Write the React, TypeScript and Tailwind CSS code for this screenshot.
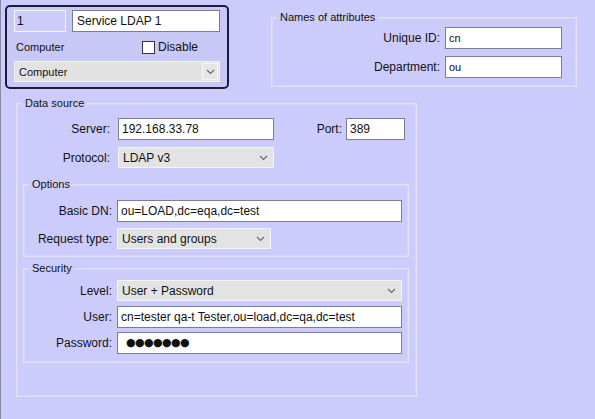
import React from 'react';

const Chevron = () => (
    <svg width="9" height="6" viewBox="0 0 9 6" className="shrink-0">
        <polyline points="1,1 4.5,4.5 8,1" fill="none" stroke="#6a6a6a" strokeWidth="1.2" />
    </svg>
);

function Field({ value, className = '' }: { value: string; className?: string }) {
    return (
        <div className={`h-[22px] bg-white border border-[#7c7c8e] flex items-center pl-[3px] whitespace-nowrap overflow-hidden ${className}`}>
            {value}
        </div>
    );
}

function Select({ value, className = '' }: { value: string; className?: string }) {
    return (
        <div className={`h-[21px] bg-[#e3e3e3] border border-[#f4f4f4] flex items-center pl-[4px] pr-[5px] ${className}`}>
            <span className="flex-1">{value}</span>
            <Chevron />
        </div>
    );
}

function Group({ title, className = '', children }: { title: string; className?: string; children: React.ReactNode }) {
    return (
        <fieldset className={`border border-[#e2e2f4] shadow-[inset_0_0_0_1px_#d6d6ee] ${className}`}>
            <legend className="ml-[5px] px-[3px] leading-[14px]">{title}</legend>
            {children}
        </fieldset>
    );
}

export default function App() {
    return (
        <div className="w-[595px] h-[419px] overflow-hidden bg-[#ccccfc] border-l border-[#8a8aa4] font-['Liberation_Sans',Arial,sans-serif] text-[11px] text-[#111] leading-[14px]">
            <div className="flex items-start">
                {/* service panel */}
                <div className="ml-[4px] mt-[5px] w-[224px] h-[84px] rounded-[5px] border-2 border-[#1d1d3b] bg-[#c8c8f6] px-[7px] pt-[3px]">
                    <div className="flex gap-[6px]">
                        <div className="w-[52px] h-[22px] bg-[#ccccfa] border border-[#f6f6ff] flex items-center pl-[2px] text-[12px]">1</div>
                        <Field value="Service LDAP 1" className="flex-1 pl-[4px] text-[12px]" />
                    </div>
                    <div className="flex items-center mt-[8px] h-[14px]">
                        <span className="w-[128px] pl-[2px]">Computer</span>
                        <div className="w-[13px] h-[13px] bg-white border border-[#333344]" />
                        <span className="ml-[3px] text-[12px]">Disable</span>
                    </div>
                    <div className="mt-[7px] h-[21px] bg-[#e2e2e2] border border-[#f2f2f2] flex items-center pl-[4px] pr-[1px]">
                        <span className="flex-1">Computer</span>
                        <div className="w-[16px] h-[17px] border border-[#f6f6f6] bg-[#e6e6e6] flex items-center justify-center">
                            <Chevron />
                        </div>
                    </div>
                </div>

                <Group title="Names of attributes" className="ml-[42px] mt-[10px] w-[306px] h-[77px]">
                    <div className="flex items-center mt-[3px]">
                        <span className="w-[168px] text-right text-[12px]">Unique ID:</span>
                        <Field value="cn" className="ml-[5px] w-[117px]" />
                    </div>
                    <div className="flex items-center mt-[7px]">
                        <span className="w-[168px] text-right text-[12px]">Department:</span>
                        <Field value="ou" className="ml-[5px] w-[117px]" />
                    </div>
                </Group>
            </div>

            <Group title="Data source" className="ml-[15px] mt-[7px] w-[401px] h-[301px]">
                <div className="flex items-center mt-[8px]">
                    <span className="w-[93px] text-right text-[12px]">Server:</span>
                    <Field value="192.168.33.78" className="ml-[8px] w-[156px] text-[12px]" />
                    <span className="w-[72px] pr-[4px] text-right text-[12px]">Port:</span>
                    <Field value="389" className="w-[59px] text-[12px]" />
                </div>
                <div className="flex items-center mt-[7px]">
                    <span className="w-[93px] text-right text-[12px]">Protocol:</span>
                    <Select value="LDAP v3" className="ml-[8px] w-[156px] text-[12px]" />
                </div>

                <Group title="Options" className="ml-[6px] mt-[9px] w-[386px] h-[80px]">
                    <div className="flex items-center mt-[9px]">
                        <span className="w-[88px] text-right text-[12px]">Basic DN:</span>
                        <Field value="ou=LOAD,dc=eqa,dc=test" className="ml-[5px] w-[285px] text-[12px]" />
                    </div>
                    <div className="flex items-center mt-[6px]">
                        <span className="w-[88px] text-right text-[12px]">Request type:</span>
                        <Select value="Users and groups" className="ml-[5px] w-[154px] text-[12px]" />
                    </div>
                </Group>

                <Group title="Security" className="ml-[6px] mt-[4px] w-[386px] h-[102px]">
                    <div className="flex items-center mt-[5px]">
                        <span className="w-[88px] text-right text-[12px]">Level:</span>
                        <Select value="User + Password" className="ml-[5px] w-[285px] text-[12px]" />
                    </div>
                    <div className="flex items-center mt-[5px]">
                        <span className="w-[88px] text-right text-[12px]">User:</span>
                        <Field value="cn=tester qa-t Tester,ou=load,dc=qa,dc=test" className="ml-[5px] w-[285px] text-[12px]" />
                    </div>
                    <div className="flex items-center mt-[4px]">
                        <span className="w-[88px] text-right text-[12px]">Password:</span>
                        <Field value="●●●●●●●" className="ml-[5px] w-[285px] pl-[8px] font-['DejaVu_Sans',sans-serif] text-[11px] tracking-[-0.6px]" />
                    </div>
                </Group>
            </Group>
        </div>
    );
}
